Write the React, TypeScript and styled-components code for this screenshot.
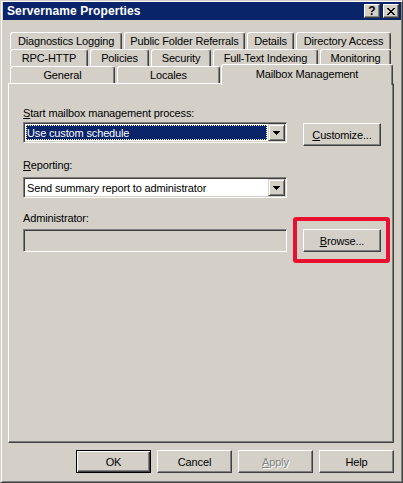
import React from 'react';
import styled, { createGlobalStyle, css } from 'styled-components';

const GlobalStyle = createGlobalStyle`
  html, body {
    margin: 0;
    padding: 0;
    background: #d4d0c8;
  }
  body {
    font-family: "Liberation Sans", Arial, sans-serif;
    font-size: 11px;
    letter-spacing: -0.15px;
    color: #000;
  }
`;

const raised = css`
  border: 1px solid;
  border-color: #fff #404040 #404040 #fff;
  box-shadow: inset -1px -1px #808080;
`;

const sunken = css`
  border: 1px solid;
  border-color: #808080 #fff #fff #808080;
  box-shadow: inset 1px 1px #404040, inset -1px -1px #d4d0c8;
`;

const Window = styled.div`
  box-sizing: border-box;
  width: 403px;
  height: 483px;
  padding: 1px 1px 1px 2px;
  background: #d4d0c8;
  border: 1px solid;
  border-color: #d4d0c8 #404040 #404040 #d4d0c8;
  box-shadow: inset 1px 1px #fff, inset -1px -1px #808080;
  display: flex;
  flex-direction: column;
`;

const TitleBar = styled.div`
  height: 18px;
  display: flex;
  align-items: center;
  padding: 0 2px 0 4px;
  background: #0a246a;
  color: #fff;
  font-size: 12px;
  font-weight: bold;
  letter-spacing: 0.1px;
`;

const Title = styled.span`
  flex: 1;
`;

const CaptionButton = styled.div<{ $gap?: number }>`
  box-sizing: border-box;
  width: 16px;
  height: 14px;
  margin-left: ${p => p.$gap ?? 0}px;
  background: #d4d0c8;
  border: 1px solid;
  border-color: #fff #404040 #404040 #fff;
  box-shadow: inset -1px -1px #808080;
  display: flex;
  align-items: center;
  justify-content: center;
  color: #000;
  font-size: 12px;
  font-weight: bold;
  line-height: 1;
`;

const Client = styled.div`
  flex: 1;
  display: flex;
  flex-direction: column;
  padding: 12px 7px 0 5px;
`;

const TabStrip = styled.div`
  display: flex;
  flex-direction: column;
`;

const TabRow = styled.div`
  display: flex;
  align-items: flex-start;
  gap: 2px;
  height: 17px;
  padding-left: 2px;
`;

const Tab = styled.div<{ $w: number; $active?: boolean }>`
  box-sizing: border-box;
  flex-shrink: 0;
  width: ${p => p.$w}px;
  height: 17px;
  background: #d4d0c8;
  border-top: 1px solid #fff;
  border-left: 1px solid #fff;
  border-right: 1px solid #404040;
  border-radius: 3px 3px 0 0;
  box-shadow: inset -1px 0 #808080;
  display: flex;
  align-items: center;
  justify-content: center;
  white-space: nowrap;
  ${p =>
    p.$active &&
    css`
      position: relative;
      z-index: 1;
      height: 21px;
      margin: -2px 0 0 -1px;
      padding-bottom: 3px;
    `}
`;

const Panel = styled.div`
  box-sizing: border-box;
  height: 360px;
  ${raised}
  padding: 23px 0 0 14px;
  display: flex;
  flex-direction: column;
`;

const FieldLabel = styled.div<{ $top?: number }>`
  line-height: 13px;
  margin-top: ${p => p.$top ?? 0}px;
`;

const FieldRow = styled.div<{ $top?: number }>`
  display: flex;
  align-items: flex-start;
  gap: 16px;
  margin-top: ${p => p.$top ?? 0}px;
`;

const Combo = styled.div`
  box-sizing: border-box;
  width: 264px;
  height: 21px;
  ${sunken}
  background: #fff;
  padding: 1px;
  display: flex;
`;

const ComboValue = styled.div<{ $selected?: boolean }>`
  flex: 1;
  margin: 1px;
  padding-left: 1px;
  display: flex;
  align-items: center;
  white-space: nowrap;
  ${p =>
    p.$selected &&
    css`
      background: #0a246a;
      color: #fff;
      outline: 1px dotted #fffab8;
      outline-offset: -1px;
    `}
`;

const DropButton = styled.div`
  box-sizing: border-box;
  flex-shrink: 0;
  width: 17px;
  height: 17px;
  background: #d4d0c8;
  border: 1px solid;
  border-color: #d4d0c8 #404040 #404040 #d4d0c8;
  box-shadow: inset 1px 1px #fff, inset -1px -1px #808080;
  display: flex;
  align-items: center;
  justify-content: center;
`;

const TextBox = styled.div`
  box-sizing: border-box;
  width: 264px;
  height: 23px;
  ${sunken}
  background: #d4d0c8;
`;

const Button = styled.button<{ $w: number; $default?: boolean; $top?: number }>`
  box-sizing: border-box;
  width: ${p => p.$w}px;
  height: 23px;
  margin-top: ${p => p.$top ?? 0}px;
  padding: 0;
  font-family: "Liberation Sans", Arial, sans-serif;
  font-size: 11px;
  letter-spacing: -0.15px;
  color: #000;
  background: #d4d0c8;
  ${raised}
  box-shadow: inset -1px -1px #808080, inset 1px 1px #d4d0c8;
  ${p =>
    p.$default &&
    css`
      border: 1px solid #000;
      box-shadow: inset 1px 1px #fff, inset -1px -1px #404040, inset -2px -2px #808080;
    `}
  &:disabled {
    color: #808080;
    text-shadow: 1px 1px #fff;
  }
`;

const Marked = styled.div`
  position: relative;
`;

const Highlight = styled.div`
  position: absolute;
  left: -10px;
  top: -12px;
  width: 97px;
  height: 46px;
  box-sizing: border-box;
  border: 4px solid #ea0f2f;
  border-radius: 3px;
  pointer-events: none;
`;

const ButtonBar = styled.div`
  display: flex;
  justify-content: flex-end;
  gap: 6px;
  margin-top: 7px;
`;

const DownArrow = () => (
  <svg width="7" height="4" viewBox="0 0 7 4" shapeRendering="crispEdges">
    <path d="M0 0h7v1H0zM1 1h5v1H1zM2 2h3v1H2zM3 3h1v1H3z" fill="#000" />
  </svg>
);

const CloseGlyph = () => (
  <svg width="8" height="7" viewBox="0 0 8 7" shapeRendering="crispEdges">
    <path
      d="M0 0h2v1H0zM6 0h2v1H6zM1 1h2v1H1zM5 1h2v1H5zM2 2h4v1H2zM3 3h2v1H3zM2 4h4v1H2zM1 5h2v1H1zM5 5h2v1H5zM0 6h2v1H0zM6 6h2v1H6z"
      fill="#000"
    />
  </svg>
);

const backRows = [
  [
    { label: 'Diagnostics Logging', w: 112 },
    { label: 'Public Folder Referrals', w: 121 },
    { label: 'Details', w: 47 },
    { label: 'Directory Access', w: 95 },
  ],
  [
    { label: 'RPC-HTTP', w: 78 },
    { label: 'Policies', w: 59 },
    { label: 'Security', w: 60 },
    { label: 'Full-Text Indexing', w: 105 },
    { label: 'Monitoring', w: 71 },
  ],
];

export default function App() {
  return (
    <>
      <GlobalStyle />
      <Window>
        <TitleBar>
          <Title>Servername Properties</Title>
          <CaptionButton>?</CaptionButton>
          <CaptionButton $gap={3}>
            <CloseGlyph />
          </CaptionButton>
        </TitleBar>

        <Client>
          <TabStrip>
            {backRows.map((row, i) => (
              <TabRow key={i}>
                {row.map(t => (
                  <Tab key={t.label} $w={t.w}>
                    {t.label}
                  </Tab>
                ))}
              </TabRow>
            ))}
            <TabRow>
              <Tab $w={105}>General</Tab>
              <Tab $w={103}>Locales</Tab>
              <Tab $w={172} $active>
                Mailbox Management
              </Tab>
            </TabRow>
          </TabStrip>

          <Panel>
            <FieldLabel>
              <u>S</u>tart mailbox management process:
            </FieldLabel>
            <FieldRow $top={2}>
              <Combo>
                <ComboValue $selected>Use custom schedule</ComboValue>
                <DropButton>
                  <DownArrow />
                </DropButton>
              </Combo>
              <Button $w={78} $top={1}>
                <u>C</u>ustomize...
              </Button>
            </FieldRow>

            <FieldLabel $top={13}>
              <u>R</u>eporting:
            </FieldLabel>
            <FieldRow $top={5}>
              <Combo>
                <ComboValue>Send summary report to administrator</ComboValue>
                <DropButton>
                  <DownArrow />
                </DropButton>
              </Combo>
            </FieldRow>

            <FieldLabel $top={14}>Administrator:</FieldLabel>
            <FieldRow $top={4}>
              <TextBox />
              <Marked>
                <Button $w={78}>
                  <u>B</u>rowse...
                </Button>
                <Highlight />
              </Marked>
            </FieldRow>
          </Panel>

          <ButtonBar>
            <Button $w={75} $default>
              OK
            </Button>
            <Button $w={75}>Cancel</Button>
            <Button $w={75} disabled>
              <u>A</u>pply
            </Button>
            <Button $w={75}>Help</Button>
          </ButtonBar>
        </Client>
      </Window>
    </>
  );
}
